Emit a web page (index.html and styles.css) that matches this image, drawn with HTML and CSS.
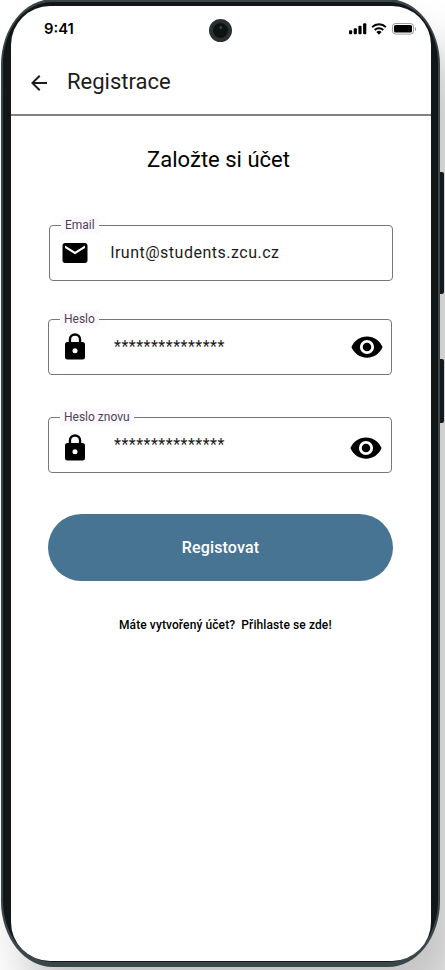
FILE: index.html
```html
<!DOCTYPE html>
<html lang="cs">
<head>
<meta charset="utf-8">
<title>Registrace</title>
<link rel="stylesheet" href="styles.css">
</head>
<body>
<div class="phone">
  <span class="side-key volume"></span>
  <span class="side-key power"></span>
  <div class="bezel">
    <main class="screen">
      <div class="status">
        <span class="time">9:41</span>
        <span class="camera"></span>
        <svg class="signal" width="18" height="12" viewBox="0 0 18 12"><rect x="0" y="7.2" width="3.2" height="4" rx="1"/><rect x="4.7" y="5.2" width="3.2" height="6" rx="1"/><rect x="9.4" y="2.8" width="3.2" height="8.4" rx="1"/><rect x="14.1" y=".3" width="3.2" height="10.9" rx="1"/></svg>
        <svg class="wifi" width="16" height="12" viewBox="0 0 16 12"><g fill="none" stroke="#000" stroke-width="2"><path d="M1.1 4.1a9.9 9.9 0 0 1 13.8 0"/><path d="M3.7 7a6.2 6.2 0 0 1 8.6 0"/></g><path d="M8 11.7 5.4 9a3.8 3.8 0 0 1 5.2 0z"/></svg>
        <svg class="battery" width="25" height="12" viewBox="0 0 25 12"><rect x=".5" y=".5" width="21" height="10.6" rx="3" fill="none" stroke="#000" stroke-opacity=".38"/><rect x="2" y="2" width="18" height="7.6" rx="1.6"/><path d="M23 4v4c1.6-.7 1.6-3.3 0-4z" opacity=".4"/></svg>
      </div>
      <header class="bar">
        <svg class="back" width="24" height="24" viewBox="0 0 24 24"><path fill="#1d1b20" d="M7.825 13l5.6 5.6L12 20l-8-8 8-8 1.425 1.4L7.825 11H20v2z"/></svg>
        <span class="title">Registrace</span>
      </header>
      <section class="content">
        <h1>Založte si účet</h1>
        <div class="field email">
          <span class="label">Email</span>
          <svg class="mail" width="30" height="30" viewBox="0 0 24 24"><path d="M20 4H4c-1.100 0-2 .9-2 2v12c0 1.100.9 2 2 2h16c1.100 0 2-.9 2-2V6c0-1.100-.9-2-2-2zm0 4-8 5-8-5V6l8 5 8-5z"/></svg>
          <span class="value">lrunt@students.zcu.cz</span>
        </div>
        <div class="field password">
          <span class="label">Heslo</span>
          <svg class="lock" width="30" height="30" viewBox="0 0 24 24"><path d="M18 8h-1V6A5 5 0 0 0 7 6v2H6a2 2 0 0 0-2 2v10a2 2 0 0 0 2 2h12a2 2 0 0 0 2-2V10a2 2 0 0 0-2-2zm-6 9a2 2 0 1 1 0-4 2 2 0 0 1 0 4zm3.1-9H8.900V6a3.100 3.100 0 0 1 6.200 0z"/></svg>
          <span class="value">***************</span>
          <svg class="eye" width="34" height="34" viewBox="0 0 24 24"><path d="M12 4.500C7 4.500 2.730 7.610 1 12c1.730 4.390 6 7.500 11 7.500s9.270-3.110 11-7.500c-1.730-4.390-6-7.500-11-7.500zM12 17a5 5 0 1 1 0-10 5 5 0 0 1 0 10zm0-8a3 3 0 1 0 0 6 3 3 0 0 0 0-6z"/></svg>
        </div>
        <div class="field password repeat">
          <span class="label">Heslo znovu</span>
          <svg class="lock" width="30" height="30" viewBox="0 0 24 24"><path d="M18 8h-1V6A5 5 0 0 0 7 6v2H6a2 2 0 0 0-2 2v10a2 2 0 0 0 2 2h12a2 2 0 0 0 2-2V10a2 2 0 0 0-2-2zm-6 9a2 2 0 1 1 0-4 2 2 0 0 1 0 4zm3.1-9H8.900V6a3.100 3.100 0 0 1 6.200 0z"/></svg>
          <span class="value">***************</span>
          <svg class="eye" width="34" height="34" viewBox="0 0 24 24"><path d="M12 4.500C7 4.500 2.730 7.610 1 12c1.730 4.390 6 7.500 11 7.500s9.270-3.110 11-7.500c-1.730-4.390-6-7.500-11-7.500zM12 17a5 5 0 1 1 0-10 5 5 0 0 1 0 10zm0-8a3 3 0 1 0 0 6 3 3 0 0 0 0-6z"/></svg>
        </div>
        <button class="submit">Registovat</button>
        <p class="login">Máte vytvořený účet?&nbsp; Přihlaste se zde!</p>
      </section>
    </main>
  </div>
</div>
</body>
</html>
```
FILE: styles.css
```css
* { box-sizing: border-box; }
html, body { height: 970px; overflow: hidden; }
body { margin: 0; background: #fff; font-family: Roboto, sans-serif; color: #000; }
svg { display: block; flex: none; }
.phone {
  position: relative;
  width: 439px;
  height: 968px;
  margin: -1px 0 0 1px;
  padding: 3px 2px 5px;
  border-radius: 52px / 66px;
  background: #3b464a;
  box-shadow: 24px 45px 50px rgba(0, 0, 0, .23);
}
.side-key { position: absolute; left: 439px; width: 4px; border-radius: 0 2px 2px 0; background: #15191b; }
.volume { top: 173px; height: 122px; }
.power { top: 360px; height: 64px; }
.bezel { height: 960px; padding: 4px 7px 1px 8px; border-radius: 49px / 61px; background: #111717; }
.screen { width: 420px; height: 955px; background: #fff; border-radius: 39px; overflow: hidden; }
.status { display: flex; height: 48px; padding-left: 33px; align-items: flex-start; }
.time { width: 165px; padding-top: 14px; font: 600 14.8px/18px Inter, sans-serif; }
.camera { width: 23px; height: 23px; margin-top: 13px; border: 4px solid #2b3133; border-radius: 50%; background: radial-gradient(circle at 52% 30%, #394143 0 1px, #0d1213 2px); }
.signal { margin: 17px 0 0 117px; }
.wifi { margin: 17px 0 0 4px; }
.battery { margin: 17px 0 0 5px; }
.bar { display: flex; align-items: center; height: 62px; padding: 0 16px 2px; border-bottom: 2px solid #828083; }
.title { margin: -2px 0 0 16px; font-size: 22px; line-height: 28px; color: #1d1b20; }
.content { padding: 30px 38px 0 37px; }
h1 { margin: 0 0 51px; padding-right: 4px; text-align: center; font-size: 22px; font-weight: 400; line-height: 28px; }
.field { position: relative; display: flex; width: 344px; height: 56px; border: 1px solid #79747e; border-radius: 4px; }
.email { margin-left: 1px; }
.password { margin-top: 38px; }
.repeat { margin-top: 42px; }
.label { position: absolute; left: 11px; top: -9px; padding: 0 4px; background: #fef7ff; color: #49454f; font-size: 12px; line-height: 16px; }
.mail { margin: 12px 0 0 10px; }
.lock { margin: 12px 0 0 11px; }
.repeat .lock { margin-top: 15px; }
.value { padding-top: 15px; margin-left: 20.500px; font-size: 16px; line-height: 24px; letter-spacing: .5px; color: #1d1b20; }
.password .value { margin-left: 24px; }
.eye { margin: 10px 7px 0 auto; }
.repeat .eye { margin: 12.500px 8.500px 0 auto; }
.submit { display: block; width: 345px; height: 67px; margin-top: 41px; padding: 0; border: 0; border-radius: 34px; background: #487494; color: #fff; font: 500 16px/24px Roboto, sans-serif; letter-spacing: .15px; }
.login { margin: 36px 0 0 71px; font-size: 12px; font-weight: 500; line-height: 16px; letter-spacing: .1px; white-space: nowrap; }
```
